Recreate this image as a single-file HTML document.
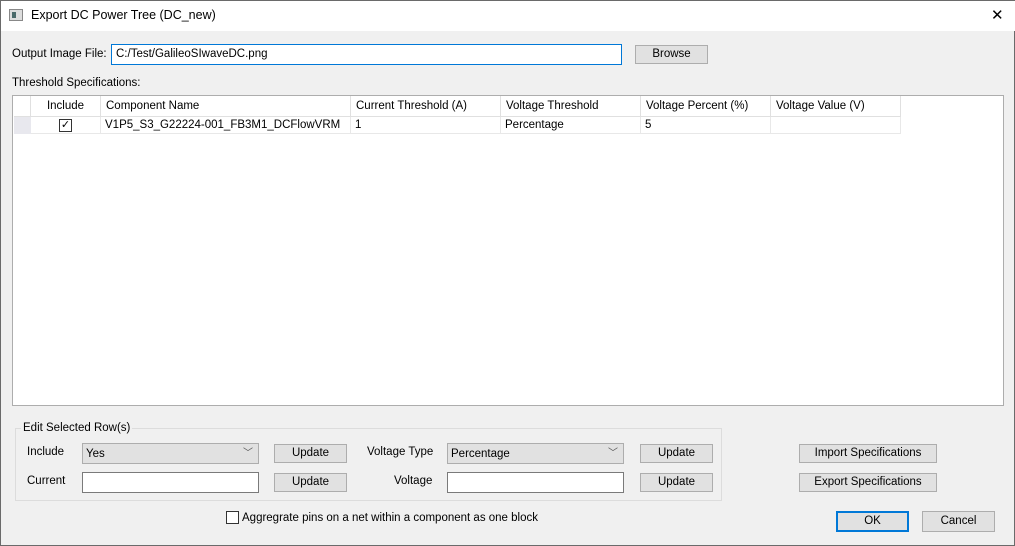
<!DOCTYPE html>
<html><head><style>
*{box-sizing:border-box;margin:0;padding:0}
body{width:1015px;height:546px;background:#f0f0f0;font-family:"Liberation Sans",sans-serif;font-size:11.5px;color:#000;position:relative;overflow:hidden;border:1px solid #6a6a6a}
.a{position:absolute;white-space:nowrap}
.btn{position:absolute;background:#e1e1e1;border:1px solid #adadad;text-align:center;line-height:17px;white-space:nowrap}
.inp{position:absolute;background:#fff;border:1px solid #7a7a7a;white-space:nowrap}
.th{position:absolute;top:95px;height:21px;border-right:1px solid #e0e0e0;border-bottom:1px solid #e0e0e0;line-height:21px;padding-left:5px;background:#fff;white-space:nowrap}
.td{position:absolute;top:116px;height:17px;border-right:1px solid #e8e8e8;border-bottom:1px solid #e8e8e8;line-height:17px;padding-left:4px;background:#fff;white-space:nowrap;overflow:hidden}
</style></head><body>
<div class="a" style="left:0;top:0;width:1015px;height:30px;background:#fff"></div>
<div class="a" style="left:8px;top:8px;width:14px;height:12px;border:1px solid #888;background:#ddd"><div style="position:absolute;left:2px;top:2px;width:4px;height:6px;background:#4a6a6a"></div></div>
<div class="a" style="left:30px;top:7px;font-size:12.5px">Export DC Power Tree (DC_new)</div>
<div class="a" style="left:990px;top:5px;font-size:15px;font-weight:300">✕</div>

<div class="a" style="left:11px;top:47px">Output Image File:</div>
<div class="inp" style="left:110px;top:43px;width:511px;height:21px;border-color:#0078d7;padding:3px 4px">C:/Test/GalileoSIwaveDC.png</div>
<div class="btn" style="left:634px;top:44px;width:73px;height:19px">Browse</div>
<div class="a" style="left:11px;top:76px">Threshold Specifications:</div>

<div class="a" style="left:11px;top:94px;width:992px;height:311px;background:#fff;border:1px solid #adadad"></div>
<div class="th" style="left:13px;width:17px;padding:0"></div>
<div class="th" style="left:30px;width:70px;padding:0;text-align:center">Include</div>
<div class="th" style="left:100px;width:250px">Component Name</div>
<div class="th" style="left:350px;width:150px">Current Threshold (A)</div>
<div class="th" style="left:500px;width:140px">Voltage Threshold</div>
<div class="th" style="left:640px;width:130px">Voltage Percent (%)</div>
<div class="th" style="left:770px;width:130px">Voltage Value (V)</div>
<div class="a" style="left:13px;top:116px;width:17px;height:17px;background:#e8e8ee"></div>
<div class="td" style="left:30px;width:70px"><div style="position:absolute;left:28px;top:2px;width:13px;height:13px;border:1px solid #333;font-size:11px;line-height:11px;text-align:center">✓</div></div>
<div class="td" style="left:100px;width:250px">V1P5_S3_G22224-001_FB3M1_DCFlowVRM</div>
<div class="td" style="left:350px;width:150px">1</div>
<div class="td" style="left:500px;width:140px">Percentage</div>
<div class="td" style="left:640px;width:130px">5</div>
<div class="td" style="left:770px;width:130px"></div>

<div class="a" style="left:14px;top:427px;width:707px;height:73px;border:1px solid #dcdcdc"></div>
<div class="a" style="left:20px;top:421px;background:#f0f0f0;padding:0 2px">Edit Selected Row(s)</div>
<div class="a" style="left:26px;top:445px">Include</div>
<div class="btn" style="left:81px;top:442px;width:177px;height:21px;text-align:left;padding-left:3px;line-height:20px">Yes<span style="position:absolute;right:5px;top:0;font-size:10px;color:#555">﹀</span></div>
<div class="btn" style="left:273px;top:443px;width:73px;height:19px">Update</div>
<div class="a" style="left:366px;top:445px">Voltage Type</div>
<div class="btn" style="left:446px;top:442px;width:177px;height:21px;text-align:left;padding-left:3px;line-height:20px">Percentage<span style="position:absolute;right:5px;top:0;font-size:10px;color:#555">﹀</span></div>
<div class="btn" style="left:639px;top:443px;width:73px;height:19px">Update</div>
<div class="a" style="left:26px;top:474px">Current</div>
<div class="inp" style="left:81px;top:471px;width:177px;height:21px"></div>
<div class="btn" style="left:273px;top:472px;width:73px;height:19px">Update</div>
<div class="a" style="left:393px;top:474px">Voltage</div>
<div class="inp" style="left:446px;top:471px;width:177px;height:21px"></div>
<div class="btn" style="left:639px;top:472px;width:73px;height:19px">Update</div>

<div class="btn" style="left:798px;top:443px;width:138px;height:19px">Import Specifications</div>
<div class="btn" style="left:798px;top:472px;width:138px;height:19px">Export Specifications</div>

<div class="a" style="left:225px;top:510px;width:13px;height:13px;border:1px solid #333;background:#fff"></div>
<div class="a" style="left:241px;top:511px">Aggregrate pins on a net within a component as one block</div>
<div class="btn" style="left:835px;top:510px;width:73px;height:21px;border:2px solid #0078d7;line-height:17px">OK</div>
<div class="btn" style="left:921px;top:510px;width:73px;height:21px;line-height:19px">Cancel</div>
</body></html>
